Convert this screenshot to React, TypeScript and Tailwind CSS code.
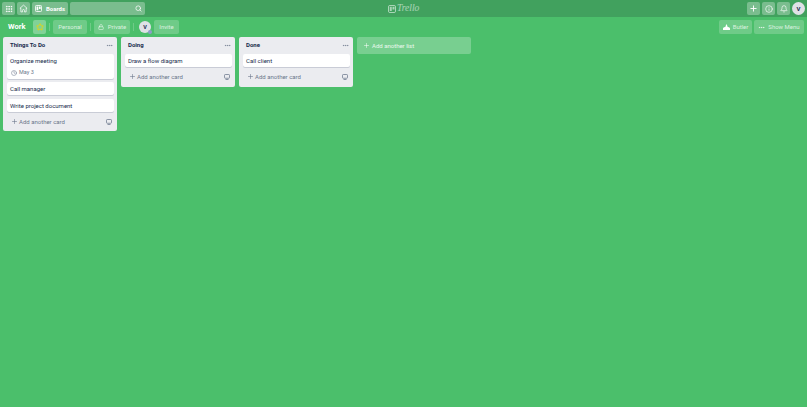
import React from 'react';
import { Bell, Clock, Ellipsis, Grip, Info, Lock, Plus, Search, Star } from 'lucide-react';

const barButton = 'h-[13px] flex items-center justify-center rounded-[2px] bg-white/30 text-white';
const headerButton = 'h-[14px] flex items-center rounded-[2px] bg-white/20 text-white/75 text-[6px] leading-[14px]';

const lists = [
  { title: 'Things To Do', cards: [{ text: 'Organize meeting', due: 'May 3' }, { text: 'Call manager' }, { text: 'Write project document' }] },
  { title: 'Doing', cards: [{ text: 'Draw a flow diagram' }] },
  { title: 'Done', cards: [{ text: 'Call client' }] },
];

const Divider = () => <div className="w-px h-[8px] bg-white/20" />;

const BoardIcon = ({ className }: { className: string }) => (
  <svg viewBox="0 0 16 16" className={className} fill="none">
    <rect x="1" y="1" width="14" height="14" rx="2.5" stroke="currentColor" strokeWidth="2" />
    <rect x="3.5" y="3.5" width="4" height="8.5" fill="currentColor" />
    <rect x="9" y="3.5" width="4" height="5.5" fill="currentColor" />
  </svg>
);

const HomeIcon = () => (
  <svg viewBox="0 0 24 24" className="w-[9px] h-[9px]" fill="none" stroke="currentColor" strokeWidth="2" strokeLinejoin="round">
    <path d="M2.5 11.5 12 3l9.5 8.5H19V21h-4.5v-4a2.5 2.5 0 0 0-5 0v4H5v-9.5z" />
  </svg>
);

const CardCopyIcon = () => (
  <svg viewBox="0 0 12 12" className="w-[6px] h-[6px]" fill="none" stroke="currentColor">
    <rect x="1" y="1" width="10" height="7.5" rx="1.5" strokeWidth="1.5" />
    <path d="M3 11h6" strokeWidth="1.5" />
  </svg>
);

const TopBar = () => (
  <div className="h-[17px] flex items-center justify-between px-[2px] bg-[#41a15e] relative">
    <div className="flex items-center gap-[2px]">
      <div className={`${barButton} w-[13px]`}><Grip className="w-[8px] h-[8px]" strokeWidth={2.5} /></div>
      <div className={`${barButton} w-[13px]`}><HomeIcon /></div>
      <div className={`${barButton} w-[36px] gap-[4px] text-[6px] leading-[13px] font-bold`}>
        <BoardIcon className="w-[7px] h-[7px]" />
        Boards
      </div>
      <div className={`${barButton} w-[75px] justify-end pr-[3px]`}><Search className="w-[7px] h-[7px]" strokeWidth={2.5} /></div>
    </div>
    {/* logo sits centered over the bar */}
    <div className="absolute left-[388px] top-[3px] flex items-center gap-[1px] text-white/55">
      <BoardIcon className="w-[8px] h-[8px]" />
      <span className="text-[9.5px] leading-[11px] italic font-['Liberation_Serif',serif]">Trello</span>
    </div>
    <div className="flex items-center gap-[2px]">
      <div className={`${barButton} w-[13px]`}><Plus className="w-[9px] h-[9px]" strokeWidth={2.5} /></div>
      <div className={`${barButton} w-[13px]`}><Info className="w-[8px] h-[8px]" strokeWidth={2} /></div>
      <div className={`${barButton} w-[13px]`}><Bell className="w-[8px] h-[8px]" strokeWidth={2} /></div>
      <div className="w-[13px] h-[13px] rounded-full bg-[#dfe1e6] text-[#172b4d] text-[6px] font-bold flex items-center justify-center">V</div>
    </div>
  </div>
);

const BoardHeader = () => (
  <div className="h-[20px] flex items-center justify-between pl-[8px] pr-[3px]">
    <div className="flex items-center">
      <span className="text-white text-[7.5px] leading-[14px] font-bold w-[25px]">Work</span>
      <div className={`${headerButton} w-[13px] justify-center !bg-white/30`}>
        <Star className="w-[8px] h-[8px] text-[#f2d600]" strokeWidth={2.5} />
      </div>
      <div className="mx-[3px]"><Divider /></div>
      <div className={`${headerButton} w-[34px] justify-center`}>Personal</div>
      <div className="mx-[3px]"><Divider /></div>
      <div className={`${headerButton} w-[36px] justify-center gap-[4px]`}>
        <Lock className="w-[6px] h-[6px]" strokeWidth={2.5} />
        Private
      </div>
      <div className="ml-[3px] mr-[5px]"><Divider /></div>
      <div className="relative w-[12px] h-[12px] mr-[3px] rounded-full bg-[#dfe1e6] text-[#172b4d] text-[5.5px] font-bold flex items-center justify-center">
        V
        <span className="absolute -right-[1px] -bottom-[1px] w-[4px] h-[4px] rounded-full bg-[#8f9cc9]" />
      </div>
      <div className={`${headerButton} w-[25px] justify-center`}>Invite</div>
    </div>
    <div className="flex items-center gap-[2px]">
      <div className={`${headerButton} w-[33px] justify-center gap-[3px]`}>
        <svg viewBox="0 0 12 10" className="w-[7px] h-[6px]" fill="white">
          <path d="M0 10 L0 7 Q1 5 4 5 L5 2 L6 0 L7 2 L8 5 Q11 5 12 7 L12 10 Z" />
        </svg>
        Butler
      </div>
      <div className={`${headerButton} w-[50px] justify-center gap-[3px]`}>
        <Ellipsis className="w-[7px] h-[7px]" strokeWidth={2.5} />
        Show Menu
      </div>
    </div>
  </div>
);

const CardList = ({ title, cards }: { title: string; cards: { text: string; due?: string }[] }) => (
  <div className="w-[114px] shrink-0 rounded-[2px] bg-[#ebecf0] pl-[4px] pr-[3px]">
    <div className="h-[17px] flex items-start justify-between pl-[3px] pr-[1px]">
      <span className="text-[6px] leading-[16px] font-bold text-[#172b4d]">{title}</span>
      <Ellipsis className="w-[7px] h-[7px] self-center text-[#6b778c]" strokeWidth={2} />
    </div>
    <div className="flex flex-col gap-[3.4px]">
      {cards.map((card) => (
        <div key={card.text} className="rounded-[2px] bg-white px-[3px] pt-[3px] pb-[2px] shadow-[0_1px_0_rgba(9,30,66,0.15)]">
          <div className="text-[6px] leading-[8px] text-[#172b4d]">{card.text}</div>
          {card.due && (
            <div className="flex items-center gap-[2px] mt-[4px] mb-[1px] pl-[1px] text-[5.5px] leading-[7px] text-[#6b778c]">
              <Clock className="w-[6px] h-[6px]" strokeWidth={2} />
              <span>{card.due}</span>
            </div>
          )}
        </div>
      ))}
    </div>
    <div className="h-[19.5px] flex items-center justify-between pl-[4px] pr-[2px] text-[#6b778c]">
      <div className="flex items-center gap-[1px] text-[6px] leading-[19px]">
        <Plus className="w-[7px] h-[7px]" strokeWidth={2} />
        Add another card
      </div>
      <CardCopyIcon />
    </div>
  </div>
);

export default function App() {
  return (
    <div className="w-[807px] h-[407px] overflow-hidden bg-[#4bbf6b] font-['Roboto','Liberation_Sans',sans-serif]">
      <TopBar />
      <BoardHeader />
      <div className="flex items-start gap-[4px] pl-[3px]">
        {lists.map((list) => (
          <CardList key={list.title} title={list.title} cards={list.cards} />
        ))}
        <div className="w-[114px] h-[17px] shrink-0 rounded-[2px] bg-white/25 flex items-center gap-[2px] pl-[6px] text-white/85 text-[6px] leading-[17px]">
          <Plus className="w-[7px] h-[7px]" strokeWidth={2} />
          Add another list
        </div>
      </div>
    </div>
  );
}
